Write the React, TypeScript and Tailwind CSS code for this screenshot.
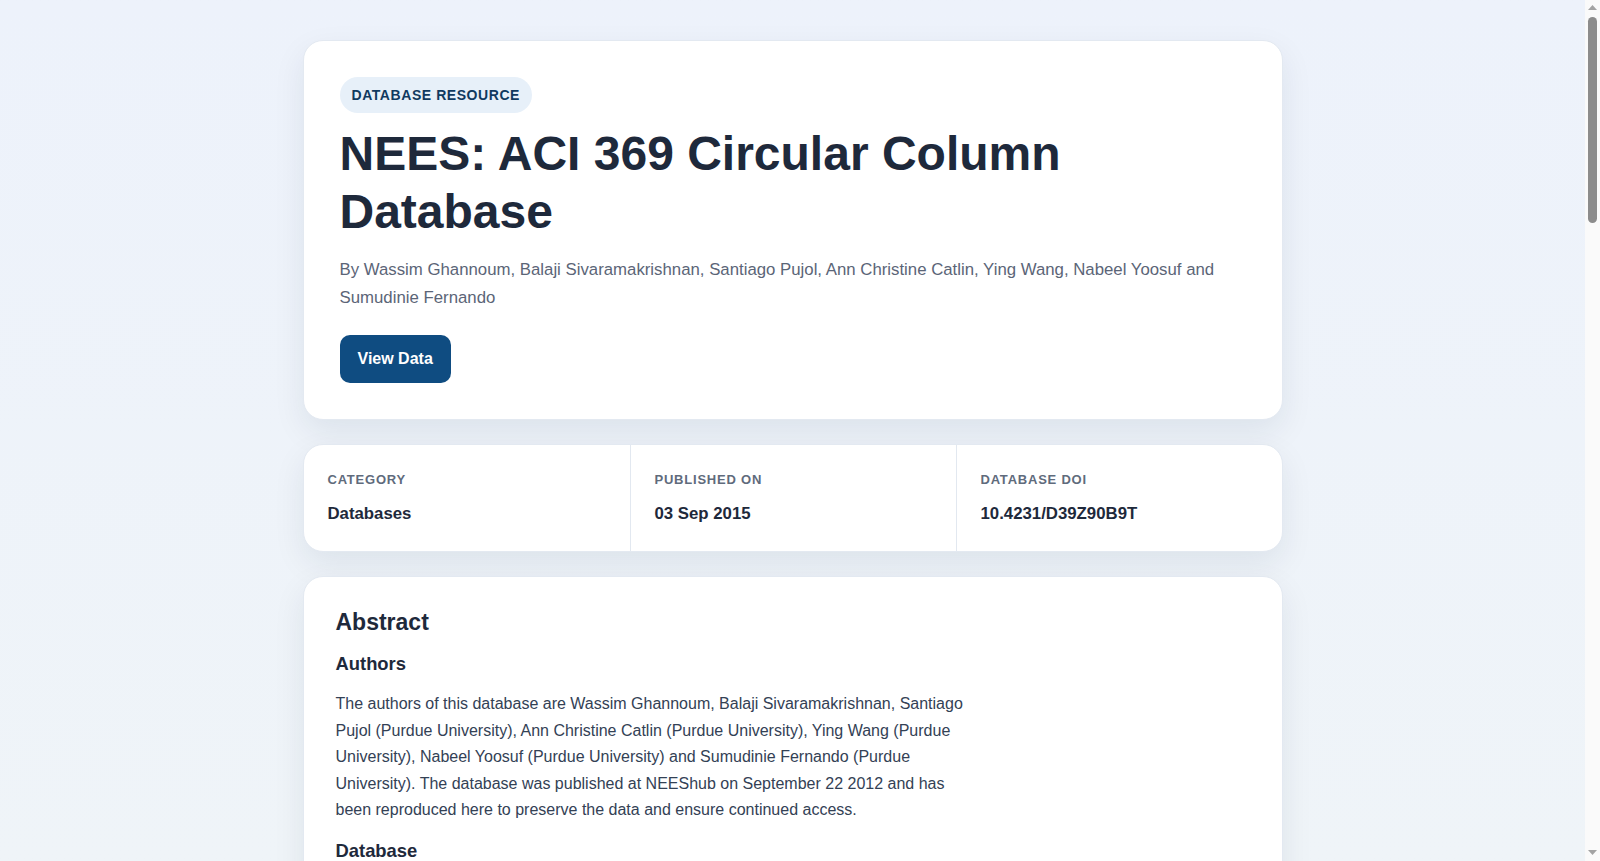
import React from 'react';

// Meta facts shown in the strip under the header card
const facts = [
  { label: 'Category', value: 'Databases' },
  { label: 'Published on', value: '03 Sep 2015' },
  { label: 'Database DOI', value: '10.4231/D39Z90B9T' },
];

const authors =
  'By Wassim Ghannoum, Balaji Sivaramakrishnan, Santiago Pujol, Ann Christine Catlin, Ying Wang, Nabeel Yoosuf and Sumudinie Fernando';

// Classic browser scrollbar as it appears in the capture
const ScrollBar: React.FC = () => (
  <div className="flex w-[15px] shrink-0 flex-col items-center bg-[#fafafa]">
    <svg width="9" height="5" viewBox="0 0 9 5" className="mt-[5px]">
      <path d="M0 5 L4.5 0 L9 5 Z" fill="#a3a3a3" />
    </svg>
    <div className="mt-[7px] h-[206px] w-[9px] rounded-full bg-[#8c8c8c]" />
    <div className="flex-1" />
    <svg width="9" height="5" viewBox="0 0 9 5" className="mb-[6px]">
      <path d="M0 0 L9 0 L4.5 5 Z" fill="#a3a3a3" />
    </svg>
  </div>
);

const App: React.FC = () => {
  return (
    <div className="flex h-screen overflow-hidden font-['Liberation_Sans',Arial,sans-serif] text-[#1e293b]">
      <div className="flex-1 overflow-hidden bg-gradient-to-b from-[#edf2fb] to-[#eff4f8]">
        <main className="mx-auto flex max-w-[980px] flex-col gap-6 pt-10 pb-16">
          {/* Header card */}
          <section className="rounded-[20px] border border-[#e3e9f1] bg-white p-9 shadow-[0_12px_32px_rgba(15,35,70,0.08)]">
            <span className="inline-block rounded-full bg-[#e7f0f9] px-3 py-2 text-[14px] leading-[20px] font-bold tracking-[0.04em] text-[#103a60] uppercase">
              Database Resource
            </span>
            <h1 className="mt-3 text-[48px] leading-[58px] font-bold text-[#1e293b]">
              NEES: ACI 369 Circular Column Database
            </h1>
            <p className="mt-[15px] text-[16.8px] leading-[27.5px] text-[#5b6577]">{authors}</p>
            <button
              type="button"
              className="mt-6 rounded-[10px] bg-[#0f4c81] px-[18px] py-[14px] text-[16px] leading-[20px] font-bold text-white"
            >
              View Data
            </button>
          </section>

          {/* Facts strip */}
          <section className="grid grid-cols-3 overflow-hidden rounded-[20px] border border-[#e3e9f1] bg-white shadow-[0_12px_32px_rgba(15,35,70,0.08)]">
            {facts.map((f, i) => (
              <div key={f.label} className={`px-6 pt-[26px] pb-[25px] ${i > 0 ? 'border-l border-[#e2e8f0]' : ''}`}>
                <div className="text-[13px] leading-[18px] font-bold tracking-[0.06em] text-[#5f6b7c] uppercase">{f.label}</div>
                <div className="mt-[13px] text-[16.8px] leading-[24px] font-bold text-[#1e293b]">{f.value}</div>
              </div>
            ))}
          </section>

          {/* Abstract */}
          <section className="rounded-[20px] border border-[#e3e9f1] bg-white px-8 pt-[31px] pb-8 shadow-[0_12px_32px_rgba(15,35,70,0.08)]">
            <h2 className="text-[23px] leading-[28px] font-bold text-[#1e293b]">Abstract</h2>
            <div className="max-w-[640px]">
              <h3 className="mt-4 text-[18.4px] leading-[24px] font-bold text-[#1e293b]">Authors</h3>
              <p className="mt-[15px] text-[16px] leading-[26.5px] text-[#334155]">
                The authors of this database are Wassim Ghannoum, Balaji Sivaramakrishnan, Santiago Pujol (Purdue
                University), Ann Christine Catlin (Purdue University), Ying Wang (Purdue University), Nabeel Yoosuf
                (Purdue University) and Sumudinie Fernando (Purdue University). The database was published at NEEShub
                on September 22 2012 and has been reproduced here to preserve the data and ensure continued access.
              </p>
              <h3 className="mt-[15px] text-[18.4px] leading-[24px] font-bold text-[#1e293b]">Database</h3>
              <p className="mt-[15px] text-[16px] leading-[26.5px] text-[#334155]">
                The ACI 369 circular column database collects test results from reinforced concrete columns with
                circular cross sections subjected to lateral loading, including geometry, material properties,
                reinforcement details, loading and measured response for each specimen.
              </p>
            </div>
          </section>
        </main>
      </div>
      <ScrollBar />
    </div>
  );
};

export default App;
